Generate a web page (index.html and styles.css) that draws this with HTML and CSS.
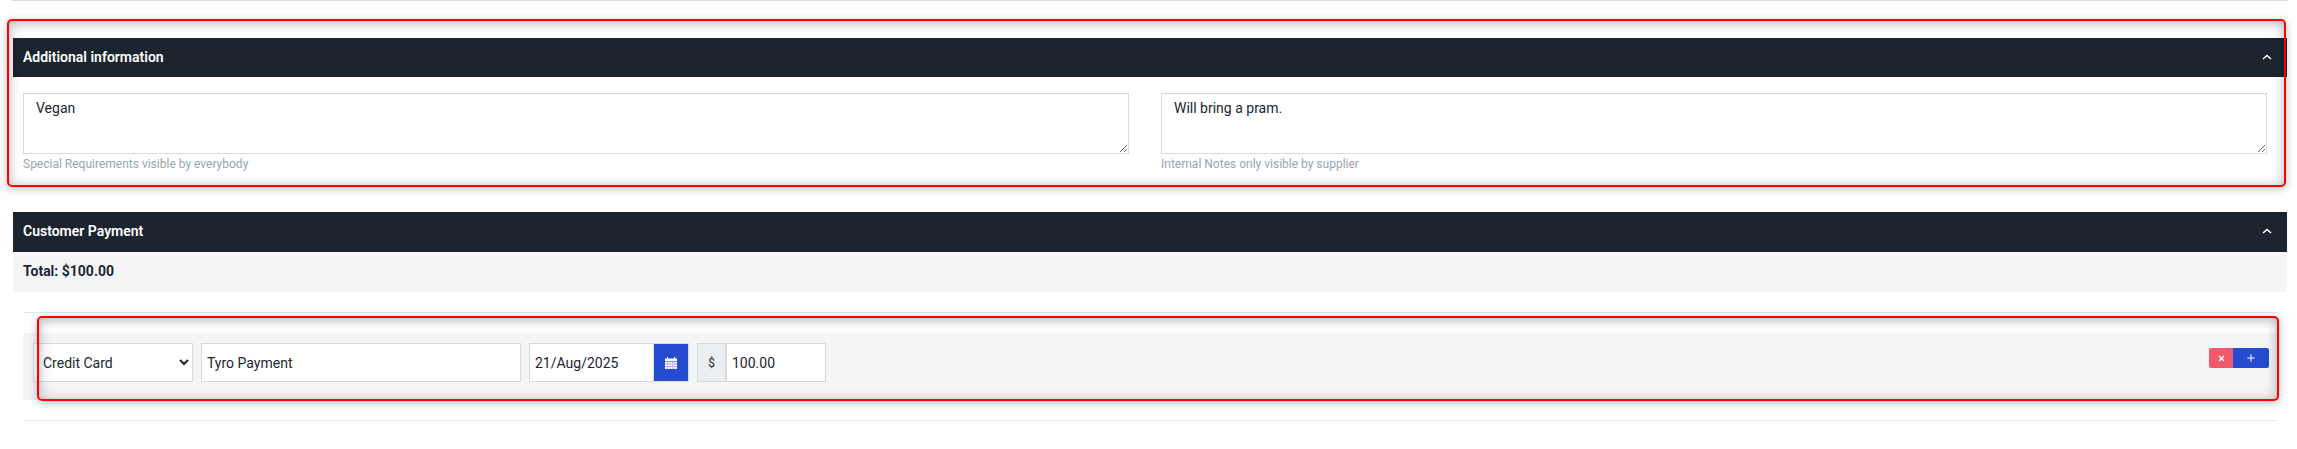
FILE: index.html
```html
<!DOCTYPE html>
<html lang="en">
<head>
<meta charset="utf-8">
<title>Booking details</title>
<link rel="stylesheet" href="styles.css">
</head>
<body>
<main class="page">
  <section class="panel panel-info">
    <header class="panel-head">
      <h2>Additional information</h2>
      <svg class="chevron" viewBox="0 0 10 6" aria-hidden="true"><path d="M1 5 5 1.4 9 5"/></svg>
    </header>
    <div class="notes">
      <div class="note">
        <textarea class="area">Vegan</textarea>
        <small>Special Requirements visible by everybody</small>
      </div>
      <div class="note">
        <textarea class="area">Will bring a pram.</textarea>
        <small>Internal Notes only visible by supplier</small>
      </div>
    </div>
  </section>
  <section class="panel panel-pay">
    <header class="panel-head">
      <h2>Customer Payment</h2>
      <svg class="chevron" viewBox="0 0 10 6" aria-hidden="true"><path d="M1 5 5 1.4 9 5"/></svg>
    </header>
    <div class="total">Total: $100.00</div>
    <div class="payments">
      <div class="pay-row">
        <select class="field pay-type"><option>Credit Card</option></select>
        <input class="field pay-desc" value="Tyro Payment">
        <div class="group">
          <input class="field pay-date" value="21/Aug/2025">
          <button class="cal" type="button" aria-label="Pick date">
            <svg viewBox="0 0 12 12" aria-hidden="true"><path class="cal-top" d="M0 1.5h2V0h1v1.5h6V0h1v1.5h2V4H0z"/><path class="cal-body" d="M0 4.6h12V12H0z"/><path class="cal-grid" d="M2.5 4.6v7.4M5 4.6v7.4M7.5 4.6v7.4M10 4.6v7.4M0 7h12M0 9.5h12"/></svg>
          </button>
        </div>
        <div class="group">
          <span class="addon">$</span>
          <input class="field pay-amount" value="100.00">
        </div>
        <div class="actions">
          <button class="act act-del" type="button" aria-label="Remove"><svg viewBox="0 0 8 8" aria-hidden="true"><path d="M1.2 1.2 6.8 6.8M6.8 1.2 1.2 6.8"/></svg></button>
          <button class="act act-add" type="button" aria-label="Add"><svg viewBox="0 0 8 8" aria-hidden="true"><path d="M4 .3v7.4M.3 4h7.4"/></svg></button>
        </div>
      </div>
    </div>
  </section>
  <div class="mark mark-one"></div>
  <div class="mark mark-two"></div>
</main>
</body>
</html>
```
FILE: styles.css
```css
* { box-sizing: border-box; }
html, body { margin: 0; height: 100%; background: #fff; }
body { font-family: Roboto, "Liberation Sans", sans-serif; color: #1c2530; overflow: hidden; }
.page { position: relative; height: 449px; padding: 0 10px 0 13px; }
.panel-info { padding-top: 38px; position: relative; }
.panel-info::before { content: ""; position: absolute; left: -1px; right: -1px; top: 0; height: 1px; background: #dcdcdc; }
.panel-head { height: 39px; background: #1c242e; color: #fff; display: flex; align-items: center; justify-content: space-between; padding: 0 15px 2px 10px; }
.panel-pay .panel-head { height: 40px; }
.panel-head h2 { margin: 0; font-size: 14px; font-weight: 600; line-height: 1; }
.chevron { width: 10px; height: 6px; fill: none; stroke: #fff; stroke-width: 1.5; }
.notes { display: grid; grid-template-columns: 1106px 1106px; column-gap: 32px; padding: 16px 10px 0; height: 135px; }
.note { display: flex; flex-direction: column; }
.area { display: block; width: 100%; height: 61px; border: 1px solid #dadada; padding: 4px 12px; font: 14px/20px Roboto, sans-serif; color: #1c2530; background: #fff; border-radius: 0; outline: 0; }
.note small { font-size: 12px; line-height: 14px; margin-top: 3px; color: #9aa5ad; }
.total { height: 40px; background: #f4f5f7; padding: 0 10px 2px; display: flex; align-items: center; font-size: 14px; font-weight: 700; }
.payments { margin: 20px 0 0 10px; width: 2254px; border-top: 1px solid #e6e6e6; border-bottom: 1px solid #e6e6e6; padding: 20px 0; height: 109px; }
.pay-row { height: 67px; background: #f4f5f7; display: flex; align-items: flex-start; padding: 10px 8px 0 10px; }
.field { height: 39px; border: 1px solid #dadada; background: #fff; font: 14px Roboto, sans-serif; color: #1c2530; padding: 0 5px; border-radius: 0; outline: 0; }
.pay-type { width: 160px; padding: 0 2px 0 5px; margin-right: 8px; }
.pay-desc { width: 320px; margin-right: 8px; }
.group { display: flex; margin-right: 8px; }
.pay-date { width: 124px; border-right: 0; }
.cal { width: 36px; height: 39px; padding: 0; border: 1px solid #dadada; background: #254bd0; display: flex; align-items: center; justify-content: center; }
.cal svg { width: 12px; height: 12px; }
.cal-top, .cal-body { fill: #fff; }
.cal-grid { fill: none; stroke: #a58cf0; stroke-width: .6; }
.addon { width: 29px; height: 39px; border: 1px solid #dadada; background: #eceff1; display: flex; align-items: center; justify-content: center; font-size: 12px; }
.pay-amount { width: 100px; }
.actions { margin: 5px 0 0 auto; display: flex; }
.act { height: 20px; padding: 0; border: 0; display: flex; align-items: center; justify-content: center; }
.act svg { width: 8px; height: 8px; fill: none; stroke: #fff; }
.act-del { width: 24px; background: #f2596b; border-radius: 2px 0 0 2px; }
.act-del svg { width: 7px; height: 7px; stroke-width: 1.6; }
.act-add { width: 36px; background: #254bd0; border-radius: 0 2px 2px 0; }
.act-add svg { stroke-width: 1; }
.mark { position: absolute; border: 2px solid #f00; border-radius: 5px; box-shadow: 0 2px 8px rgba(0,0,0,.25), inset 0 2px 12px rgba(0,0,0,.3); pointer-events: none; }
.mark-one { left: 7px; top: 19px; width: 2279px; height: 168px; }
.mark-two { left: 37px; top: 316px; width: 2242px; height: 85px; }
```
